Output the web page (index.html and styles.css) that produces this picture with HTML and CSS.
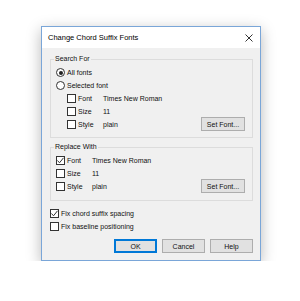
FILE: index.html
```html
<!DOCTYPE html>
<html lang="en">
<head>
    <meta charset="UTF-8">
    <meta name="viewport" content="width=device-width, initial-scale=1.0">
    <title>Change Chord Suffix Fonts</title>
    <link rel="stylesheet" href="styles.css">
</head>
<body>

    <div class="stage">
        <div class="dialog">
            <div class="titlebar">
                <span class="title">Change Chord Suffix Fonts</span>
                <svg class="close" width="8" height="8" viewBox="0 0 8 8">
                    <path d="M0.5 0.5 L7.5 7.5 M7.5 0.5 L0.5 7.5" stroke="#333" stroke-width="1" fill="none"/>
                </svg>
            </div>

            <div class="content">
                <fieldset class="group">
                    <legend>Search For</legend>
                    <div class="row"><span class="radio checked"></span>All fonts</div>
                    <div class="row"><span class="radio"></span>Selected font</div>
                    <div class="sub">
                        <div class="fields">
                            <div class="row"><span class="opt"><span class="box"></span>Font</span>Times New Roman</div>
                            <div class="row"><span class="opt"><span class="box"></span>Size</span>11</div>
                            <div class="row"><span class="opt"><span class="box"></span>Style</span>plain</div>
                        </div>
                        <button>Set Font...</button>
                    </div>
                </fieldset>

                <fieldset class="group replace">
                    <legend>Replace With</legend>
                    <div class="sub flat">
                        <div class="fields">
                            <div class="row"><span class="opt"><span class="box"><svg width="7" height="7" viewBox="0 0 7 7"><path d="M0.5 3.5 L2.5 5.8 L6.5 0.8" stroke="#333" stroke-width="1" fill="none"/></svg></span>Font</span>Times New Roman</div>
                            <div class="row"><span class="opt"><span class="box"></span>Size</span>11</div>
                            <div class="row"><span class="opt"><span class="box"></span>Style</span>plain</div>
                        </div>
                        <button>Set Font...</button>
                    </div>
                </fieldset>

                <div class="options">
                    <div class="row"><span class="box"><svg width="7" height="7" viewBox="0 0 7 7"><path d="M0.5 3.5 L2.5 5.8 L6.5 0.8" stroke="#333" stroke-width="1" fill="none"/></svg></span>Fix chord suffix spacing</div>
                    <div class="row"><span class="box"></span>Fix baseline positioning</div>
                </div>

                <div class="actions">
                    <button class="default">OK</button>
                    <button>Cancel</button>
                    <button>Help</button>
                </div>
            </div>
        </div>
    </div>

</body>
</html>
```

FILE: styles.css
```css
body {
    margin: 0;
    background: #fff;
    font-family: 'Liberation Sans', Arial, sans-serif;
    font-size: 7px;
    color: #111;
}
.stage {
    padding: 26px 0 0 41px;
}
.dialog {
    width: 218px;
    border: 1px solid #7aa6d8;
    background: #f0f0f0;
    box-shadow: 0 4px 14px rgba(0, 0, 0, 0.28);
}
.titlebar {
    height: 21px;
    background: #fff;
    display: flex;
    align-items: center;
    justify-content: space-between;
    padding: 0 7px 0 6px;
}
.title {
    font-size: 7.5px;
    color: #000;
}
.content {
    padding: 6px 7px 7px 8px;
}
.group {
    margin: 0;
    padding: 2px 7px 6px 5px;
    border: 1px solid #dcdcdc;
    min-inline-size: 0;
}
.group.replace {
    margin-top: 4px;
    padding-bottom: 7px;
}
legend {
    line-height: 10px;
    padding: 0 1px;
    margin-left: -2px;
}
.row {
    height: 13px;
    display: flex;
    align-items: center;
}
.sub {
    display: flex;
    justify-content: space-between;
    align-items: flex-end;
    margin-left: 11px;
}
.sub.flat {
    margin-left: 0;
}
.opt {
    width: 36px;
    display: flex;
    align-items: center;
}
.box {
    width: 7px;
    height: 7px;
    border: 1px solid #333;
    background: #fff;
    margin-right: 2px;
    display: flex;
    align-items: center;
    justify-content: center;
}
.radio {
    width: 7px;
    height: 7px;
    border: 1px solid #333;
    border-radius: 50%;
    background: #fff;
    margin-right: 2px;
    display: flex;
    align-items: center;
    justify-content: center;
}
.radio.checked::after {
    content: "";
    width: 4px;
    height: 4px;
    border-radius: 50%;
    background: #222;
}
button {
    font-family: inherit;
    font-size: 7px;
    color: #111;
    width: 44px;
    height: 14px;
    padding: 0;
    border: 1px solid #adadad;
    background: #e1e1e1;
}
.options {
    margin-top: 6px;
}
.actions {
    display: flex;
    justify-content: flex-end;
    gap: 5px;
    margin-top: 6px;
}
.actions button {
    width: 43px;
}
.actions button.default {
    border-color: #0078d7;
    box-shadow: inset 0 0 0 1px #0078d7;
}
```
